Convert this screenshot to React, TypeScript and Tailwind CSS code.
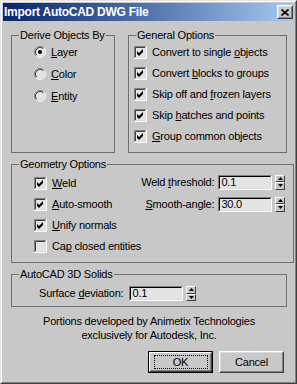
import type { ReactNode } from 'react'

function Radio({ checked }: { checked?: boolean }) {
  return (
    <svg width="12" height="12" viewBox="0 0 12 12" className="shrink-0">
      <circle cx="6" cy="6" r="4.5" fill="#e4e4e4" />
      <path d="M2.11 9.89A5.5 5.5 0 0 1 9.89 2.11" fill="none" stroke="#808080" />
      <path d="M9.89 2.11A5.5 5.5 0 0 1 2.11 9.89" fill="none" stroke="#ffffff" />
      <path d="M2.82 9.18A4.5 4.5 0 0 1 9.18 2.82" fill="none" stroke="#404040" />
      <path d="M9.18 2.82A4.5 4.5 0 0 1 2.82 9.18" fill="none" stroke="#dcdcdc" />
      {checked && <circle cx="6" cy="6" r="2" fill="#000000" />}
    </svg>
  )
}

function Check({ checked }: { checked?: boolean }) {
  return (
    <svg width="13" height="13" viewBox="0 0 13 13" className="shrink-0">
      <rect x="2" y="2" width="9" height="9" fill="#e4e4e4" />
      <path d="M0.5 12V0.5H12" fill="none" stroke="#808080" />
      <path d="M1.5 11V1.5H11" fill="none" stroke="#404040" />
      <path d="M0 12.5H12.5V0" fill="none" stroke="#ffffff" />
      <path d="M1 11.5H11.5V1" fill="none" stroke="#dcdcdc" />
      {checked && <path d="M3 5L5 7L9 3V6L5 10L3 8Z" fill="#000000" />}
    </svg>
  )
}

function Field({ value }: { value: string }) {
  return (
    <div className="h-[15px] w-[54px] shrink-0 border border-t-[#808080] border-l-[#808080] border-r-white border-b-white">
      <div className="h-full border border-t-black border-l-black border-r-[#dcdcdc] border-b-[#dcdcdc] bg-[#e4e4e4] pl-[1px] leading-[11px]">
        {value}
      </div>
    </div>
  )
}

function SpinHalf({ up }: { up?: boolean }) {
  return (
    <div className="flex h-[7.5px] items-center justify-center border border-t-white border-l-white border-r-[#404040] border-b-[#404040] bg-[#c8c8c8]">
      <svg width="5" height="3" viewBox="0 0 5 3">
        <path d={up ? 'M2.5 0L5 3H0Z' : 'M0 0H5L2.5 3Z'} fill="#000000" />
      </svg>
    </div>
  )
}

function Spinner() {
  return (
    <div className="ml-[3px] flex h-[15px] w-[10px] shrink-0 flex-col">
      <SpinHalf up />
      <SpinHalf />
    </div>
  )
}

function GroupBox({ title, className, children }: { title: string; className: string; children: ReactNode }) {
  return (
    <fieldset className={`border border-[#707070] p-0 ${className}`}>
      <legend className="ml-[7px] px-[1px] leading-[13px]">{title}</legend>
      {children}
    </fieldset>
  )
}

function Key({ children }: { children: ReactNode }) {
  return <span className="underline underline-offset-[1px]">{children}</span>
}

function CheckRow({ checked, h, children }: { checked?: boolean; h: string; children: ReactNode }) {
  return (
    <div className={`flex items-center gap-[5px] ${h}`}>
      <Check checked={checked} />
      <span>{children}</span>
    </div>
  )
}

function RadioRow({ checked, children }: { checked?: boolean; children: ReactNode }) {
  return (
    <div className="flex h-[22px] items-center gap-[5px]">
      <Radio checked={checked} />
      <span>{children}</span>
    </div>
  )
}

function Button({ children, isDefault }: { children: ReactNode; isDefault?: boolean }) {
  if (isDefault) {
    return (
      <div className="h-[22px] w-[65px] border border-black">
        <div className="h-full border border-t-white border-l-white border-r-[#404040] border-b-[#404040]">
          <div className="flex h-full items-center justify-center border border-t-[#c8c8c8] border-l-[#c8c8c8] border-r-[#808080] border-b-[#808080]">
            <div className="flex h-[14px] w-[54px] items-center justify-center border border-dotted border-black">
              {children}
            </div>
          </div>
        </div>
      </div>
    )
  }
  return (
    <div className="h-[22px] w-[65px] border border-t-white border-l-white border-r-[#404040] border-b-[#404040]">
      <div className="flex h-full items-center justify-center border border-t-[#dcdcdc] border-l-[#dcdcdc] border-r-[#808080] border-b-[#808080]">
        {children}
      </div>
    </div>
  )
}

function TitleBar() {
  return (
    <div className="flex h-[18px] shrink-0 items-center bg-linear-to-r from-[#0a246a] to-[#a6caf0] pl-[1px] pr-[1px]">
      <span className="flex-1 text-[12px] font-bold tracking-[-0.25px] text-white">Import AutoCAD DWG File</span>
      <div className="h-[14px] w-[16px] border border-t-white border-l-white border-r-[#404040] border-b-[#404040]">
        <div className="flex h-full items-center justify-center border border-t-[#dcdcdc] border-l-[#dcdcdc] border-r-[#808080] border-b-[#808080] bg-[#c8c8c8]">
          <svg width="8" height="7" viewBox="0 0 8 7">
            <path d="M0.5 0.5L7.5 6.5M7.5 0.5L0.5 6.5" stroke="#000000" strokeWidth="1.6" />
          </svg>
        </div>
      </div>
    </div>
  )
}

export default function App() {
  return (
    <div className="h-[384px] w-[297px] whitespace-nowrap border border-t-[#e4e4e4] border-l-[#e4e4e4] border-r-[#404040] border-b-[#404040] bg-[#c8c8c8] font-['Liberation_Sans',Arial,sans-serif] text-[11px] leading-[13px] tracking-[-0.2px] text-black">
      <div className="flex h-full flex-col border border-t-white border-l-white border-r-[#808080] border-b-[#808080] p-px">
        <TitleBar />

        <div className="flex flex-col pl-[8px] pr-[7px] pt-[8px]">
          <div className="flex gap-[13px]">
            <GroupBox title="Derive Objects By" className="h-[124px] w-[104px]">
              <div className="-mt-px flex flex-col pl-[22px]">
                <RadioRow checked>
                  <Key>L</Key>ayer
                </RadioRow>
                <RadioRow>
                  <Key>C</Key>olor
                </RadioRow>
                <RadioRow>
                  <Key>E</Key>ntity
                </RadioRow>
              </div>
            </GroupBox>

            <GroupBox title="General Options" className="h-[124px] w-[159px]">
              <div className="flex flex-col pl-[5px]">
                <CheckRow checked h="h-[21px]">
                  Convert to single <Key>o</Key>bjects
                </CheckRow>
                <CheckRow checked h="h-[21px]">
                  Convert <Key>b</Key>locks to groups
                </CheckRow>
                <CheckRow checked h="h-[21px]">
                  Skip off and <Key>f</Key>rozen layers
                </CheckRow>
                <CheckRow checked h="h-[21px]">
                  Skip <Key>h</Key>atches and points
                </CheckRow>
                <CheckRow checked h="h-[21px]">
                  <Key>G</Key>roup common objects
                </CheckRow>
              </div>
            </GroupBox>
          </div>

          <GroupBox title="Geometry Options" className="mt-[5px] h-[105px] w-full">
            <div className="flex">
              <div className="flex shrink-0 flex-col pl-[22px] pt-[2px]">
                <CheckRow checked h="h-[21px]">
                  <Key>W</Key>eld
                </CheckRow>
                <CheckRow checked h="h-[21px]">
                  <Key>A</Key>uto-smooth
                </CheckRow>
                <CheckRow checked h="h-[21px]">
                  <Key>U</Key>nify normals
                </CheckRow>
                <CheckRow h="h-[21px]">
                  Ca<Key>p</Key> closed entities
                </CheckRow>
              </div>
              <div className="ml-auto flex shrink-0 flex-col pr-[8px]">
                <div className="flex h-[22px] items-center justify-end">
                  <span className="mr-[4px]">
                    Weld <Key>t</Key>hreshold:
                  </span>
                  <Field value="0.1" />
                  <Spinner />
                </div>
                <div className="flex h-[22px] items-center justify-end">
                  <span className="mr-[4px]">
                    <Key>S</Key>mooth-angle:
                  </span>
                  <Field value="30.0" />
                  <Spinner />
                </div>
              </div>
            </div>
          </GroupBox>

          <GroupBox title="AutoCAD 3D Solids" className="mt-[5px] h-[39px] w-full">
            <div className="flex h-[25px] items-center pl-[27px]">
              <span className="mr-[6px]">
                Surface <Key>d</Key>eviation:
              </span>
              <Field value="0.1" />
              <Spinner />
            </div>
          </GroupBox>

          <div className="mt-[7px] flex flex-col items-center leading-[14px]">
            <span>Portions developed by Animetix Technologies</span>
            <span>exclusively for Autodesk, Inc.</span>
          </div>

          <div className="mt-[9px] flex justify-end gap-[6px] pr-[3px]">
            <Button isDefault>OK</Button>
            <Button>Cancel</Button>
          </div>
        </div>
      </div>
    </div>
  )
}
